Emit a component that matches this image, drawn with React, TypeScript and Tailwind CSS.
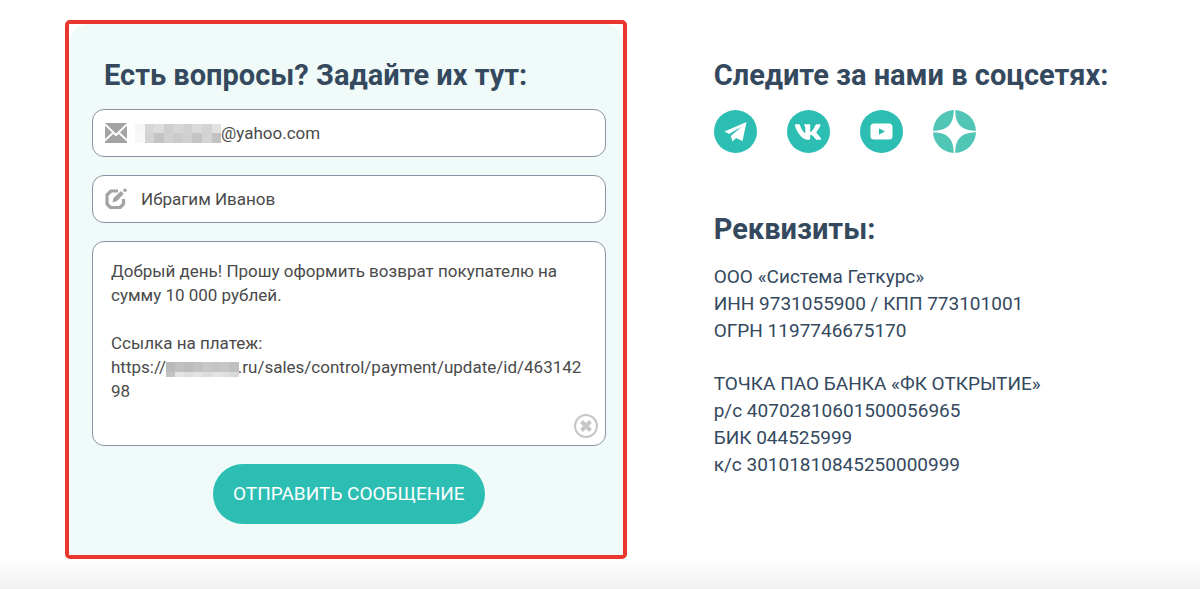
import { useState } from "react";
import { FaVk } from "react-icons/fa";

// keeps the width of the hidden host name inside the link
const HIDDEN_HOST = "\u00a0".repeat(17);

const DEFAULT_MESSAGE = [
  "Добрый день! Прошу оформить возврат покупателю на сумму 10 000 рублей.",
  "",
  "Ссылка на платеж:",
  `https://${HIDDEN_HOST}.ru/sales/control/payment/update/id/46314298`,
].join("\n");

const EMAIL_MASK = [
  ["#f6f6f6", "#d6d6d6", "#dcdcdc", "#cecece", "#d6d6d6", "#d0d0d0", "#dadada", "#d3d3d3", "#e2e2e2"],
  ["#f8f8f8", "#d2d2d2", "#c3c3c3", "#d0d0d0", "#cbcbcb", "#cfcfcf", "#c4c4c4", "#d4d4d4", "#c2c2c2"],
];

const HOST_MASK = [
  ["#bababa", "#c0c0c0", "#bcbcbc", "#c2c2c2", "#c8c8c8", "#c4c4c4", "#c6c6c6", "#bfbfbf"],
  ["#bababa", "#c0c0c0", "#bcbcbc", "#c2c2c2", "#c8c8c8", "#c4c4c4", "#c6c6c6", "#bfbfbf"],
  ["#c3c3c3", "#e3e3e3", "#dedede", "#e2e2e2", "#dcdcdc", "#e4e4e4", "#e0e0e0", "#d9d9d9"],
];

const COMPANY = ["ООО «Система Геткурс»", "ИНН 9731055900 / КПП 773101001", "ОГРН 1197746675170"];

const BANK = ["ТОЧКА ПАО БАНКА «ФК ОТКРЫТИЕ»", "р/с 40702810601500056965", "БИК 044525999", "к/с 30101810845250000999"];

function Mask({ rows, className }: { rows: string[][]; className: string }) {
  return (
    <span aria-hidden="true" className={`flex flex-col ${className}`}>
      {rows.map((row, i) => (
        <span key={i} className="flex flex-1">
          {row.map((color, j) => (
            <span key={j} className="flex-1" style={{ backgroundColor: color }} />
          ))}
        </span>
      ))}
    </span>
  );
}

function MailIcon() {
  return (
    <svg viewBox="0 0 22 20" className="h-5 w-[22px] shrink-0" fill="#a3a3a3" aria-hidden="true">
      <path d="M0 0h22L11 10.500z" />
      <path d="M0 2.500L7 9.500L0 16z" />
      <path d="M22 2.500L15 9.500L22 16z" />
      <path d="M0 20v-1.500L8.300 11L11 13.600L13.700 11L22 18.500V20z" />
    </svg>
  );
}

function EditIcon() {
  return (
    <svg viewBox="0 0 22 22" className="size-[22px] shrink-0" fill="none" aria-hidden="true">
      <path
        d="M13 3H6L2 7V16L5.500 19.500H15L18.500 16V11"
        stroke="#a3a3a3"
        strokeWidth="3.2"
        strokeLinejoin="round"
      />
      <path d="M7.500 14.500l1-4.500L16 3l2.800 2.800L12 13z" fill="#a3a3a3" />
      <circle cx="20" cy="2.200" r="1.800" fill="#a3a3a3" />
    </svg>
  );
}

function ContactForm() {
  const [email, setEmail] = useState("@yahoo.com");
  const [name, setName] = useState("Ибрагим Иванов");
  const [message, setMessage] = useState(DEFAULT_MESSAGE);

  return (
    <section className="rounded-[5px] border-4 border-[#e8382d]">
      <form
        onSubmit={(e) => e.preventDefault()}
        className="flex flex-col rounded-t-[20px] bg-[#effaf9] pt-[33px] pr-[17px] pb-[31px] pl-[23px]"
      >
        <h2 className="mb-4 pl-3 text-[29px] leading-9 font-bold text-[#34495e]">
          Есть вопросы? Задайте их тут:
        </h2>

        <div className="mb-[18px] flex h-12 items-center rounded-xl border border-[#8793a0] bg-white px-3">
          <MailIcon />
          <Mask rows={EMAIL_MASK} className="ml-2 h-[19px] w-[86px] shrink-0" />
          <input
            type="email"
            aria-label="Email"
            value={email}
            onChange={(e) => setEmail(e.target.value)}
            className="min-w-0 flex-1 text-[17px] leading-6 outline-none"
          />
        </div>

        <div className="mb-[18px] flex h-12 items-center rounded-xl border border-[#8793a0] bg-white px-3">
          <EditIcon />
          <input
            type="text"
            aria-label="Имя"
            value={name}
            onChange={(e) => setName(e.target.value)}
            className="ml-[14px] min-w-0 flex-1 text-[17px] leading-6 outline-none"
          />
        </div>

        <div className="relative mb-[18px] flex rounded-xl border border-[#8793a0] bg-white">
          <textarea
            aria-label="Сообщение"
            rows={7}
            value={message}
            onChange={(e) => setMessage(e.target.value)}
            className="flex-1 resize-none overflow-hidden px-[18px] pt-[17px] pb-[18px] text-[17px] leading-6 wrap-break-word outline-none"
          />
          <Mask rows={HOST_MASK} className="absolute top-[120px] left-[73px] h-[15px] w-[73px]" />
          <button
            type="button"
            aria-label="Очистить"
            onClick={() => setMessage("")}
            className="absolute right-[7px] bottom-[7px] size-6"
          >
            <svg viewBox="0 0 24 24" fill="none" stroke="#c6c6c6" className="size-6">
              <circle cx="12" cy="12" r="11" strokeWidth="2" />
              <path d="M7.500 7.500l9 9M16.500 7.500l-9 9" strokeWidth="4" />
            </svg>
          </button>
        </div>

        <button
          type="submit"
          className="h-[60px] self-center rounded-full bg-[#2dbeb3] px-5 text-[19px] text-white"
        >
          ОТПРАВИТЬ СООБЩЕНИЕ
        </button>
      </form>
    </section>
  );
}

function Socials() {
  return (
    <div className="mt-[17px] flex gap-[30px]">
      <a href="#telegram" aria-label="Telegram" className="flex size-[43px] items-center justify-center rounded-full bg-[#2dbeb3]">
        <svg viewBox="0 0 43 43" className="size-[43px]" fill="white">
          <path d="M10.500 21.500L32.500 12L28.500 31L22 28L18.500 31.500L16.800 26L28 16.500L15 24z" />
        </svg>
      </a>
      <a href="#vk" aria-label="ВКонтакте" className="flex size-[43px] items-center justify-center rounded-full bg-[#2dbeb3]">
        <FaVk className="size-7 text-white" />
      </a>
      <a href="#youtube" aria-label="YouTube" className="flex size-[43px] items-center justify-center rounded-full bg-[#2dbeb3]">
        <svg viewBox="0 0 43 43" className="size-[43px]">
          <rect x="10.500" y="13.500" width="22" height="16" rx="3.500" fill="white" />
          <path d="M19 18.300v6.400l6-3.200z" fill="#2dbeb3" />
        </svg>
      </a>
      <a href="#zen" aria-label="Дзен" className="flex size-[43px] rounded-full bg-[#52c6b6]">
        <svg viewBox="0 0 43 43" className="size-[43px]" fill="white">
          <path d="M20.800 0h1.400C22.500 13 27 20.500 43 20.800v1.400C27 22.500 22.500 30 22.200 43h-1.400C20.500 30 16 22.500 0 22.200v-1.400C16 20.500 20.500 13 20.800 0z" />
        </svg>
      </a>
    </div>
  );
}

export default function App() {
  return (
    <div className="bg-white font-[Roboto,sans-serif] text-[#4a4a4a]">
      <main className="grid grid-cols-[4fr_3fr] gap-[87px] px-[65px] pt-5">
        <ContactForm />

        <aside className="pt-[37px] text-[#34495e]">
          <h2 className="text-[29px] leading-9 font-bold whitespace-nowrap">Следите за нами в соцсетях:</h2>
          <Socials />

          <h2 className="mt-[58px] mb-4 text-[29px] leading-9 font-bold">Реквизиты:</h2>
          <div className="flex flex-col gap-[26px] text-[19px] leading-[27px]">
            {[COMPANY, BANK].map((lines) => (
              <address key={lines[0]} className="not-italic">
                {lines.map((line) => (
                  <p key={line}>{line}</p>
                ))}
              </address>
            ))}
          </div>
        </aside>
      </main>
      <div className="h-[30px] bg-linear-to-b from-white to-[#f0f0f0]" />
    </div>
  );
}
